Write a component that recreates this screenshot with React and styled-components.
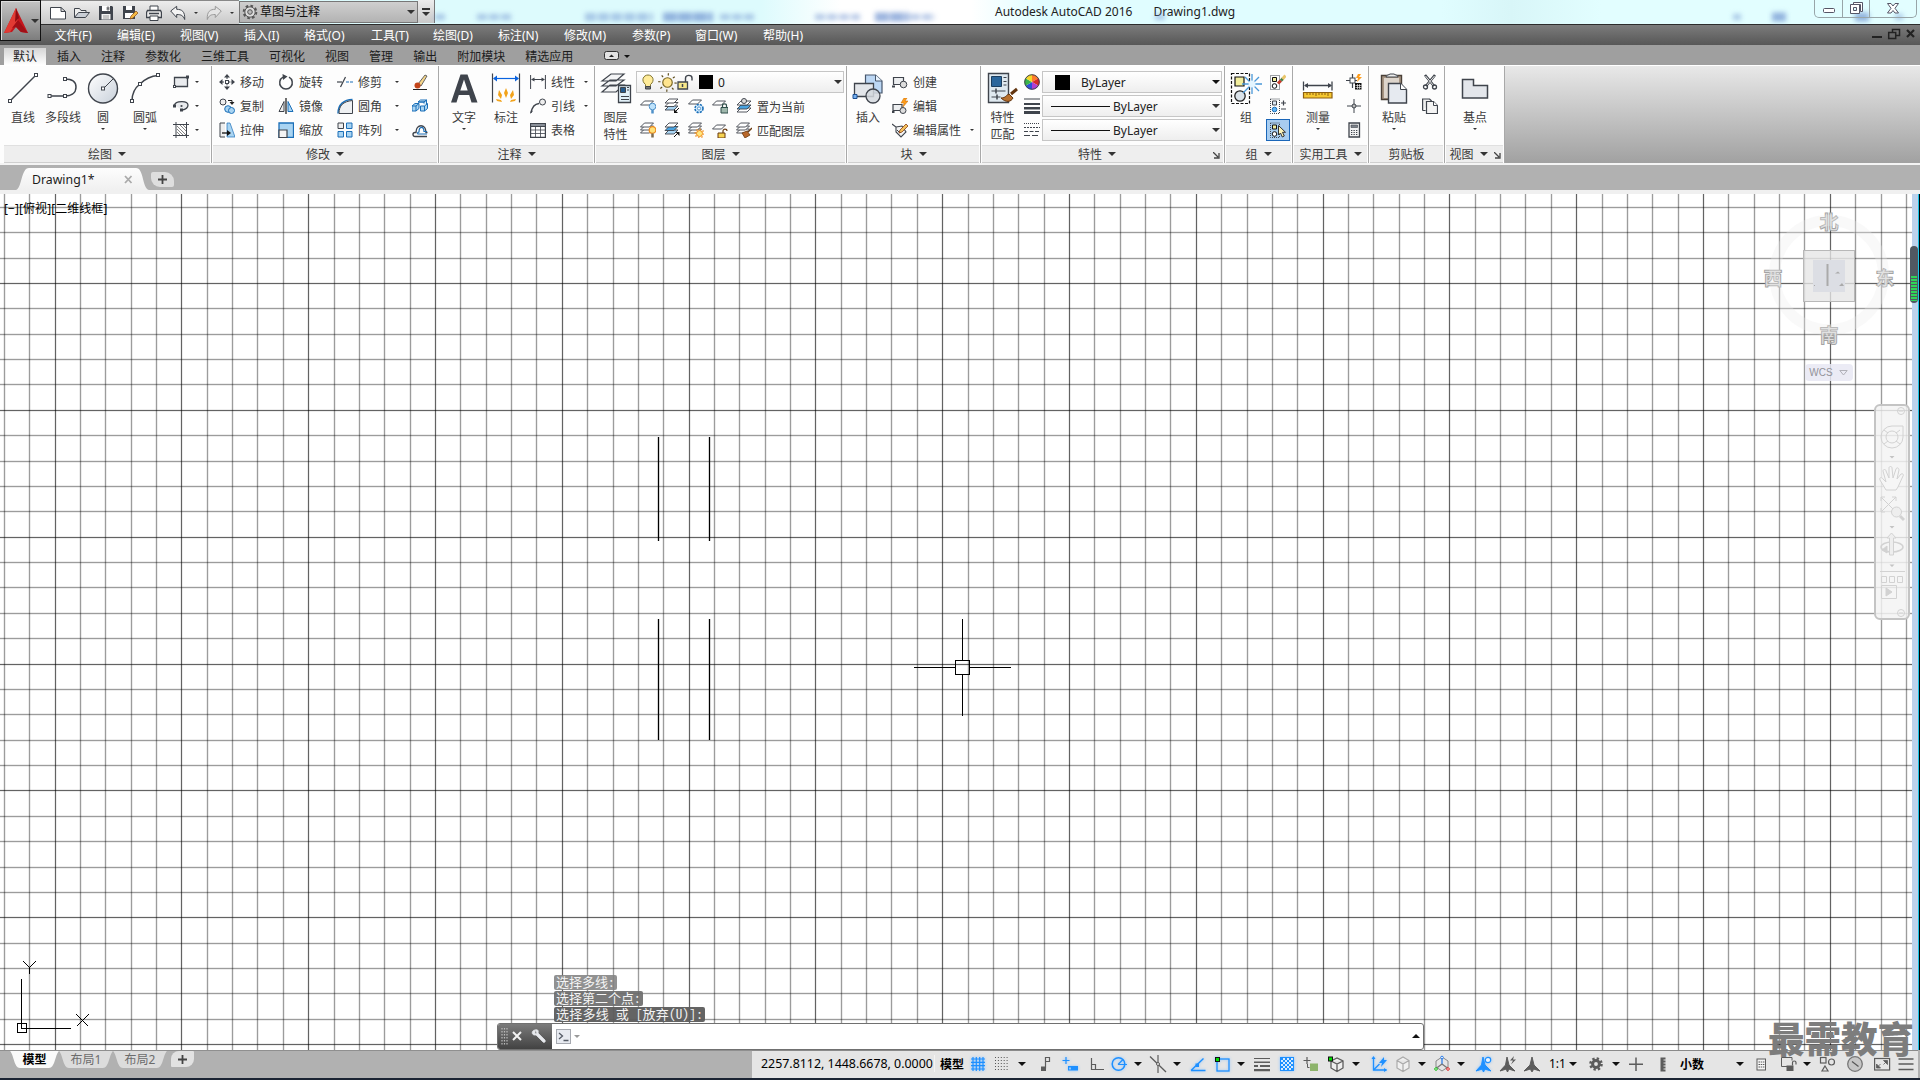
import React from "react";
import styled, { createGlobalStyle } from "styled-components";

const GlobalStyle = createGlobalStyle`
  * { box-sizing: border-box; }
  body {
    margin: 0;
    overflow: hidden;
    background: #b1b1b1;
    font-family: "Noto Sans", "Noto Sans CJK SC", sans-serif;
    font-size: 12px;
    color: #3b3b3b;
  }
  svg { display: block; flex: none; }
`

/* ---------- icons ---------- */

const DK = "#3f444c";
const BL = "#1b6fb8";
const LB = "#a9d4f2";
const SB = "#1e90ff";
const GR = "#5c5c5c";

const node = (x, y, s = 3) => <rect x={x - s / 2} y={y - s / 2} width={s} height={s} fill="#fff" stroke={DK} />;
const sheet = (x, y, fill = "#fff", w = 9) => (
  <path d={`M${x} ${y + 4}l4-4h${w}l-4 4z`} fill={fill} stroke={DK} strokeWidth=".9" />
);

const ICONS = {
  // quick access
  newFile: <path d="M.5 2.500h10.500l4.500 4v7.500h-15zM11 2.500v4h4.500" fill="#fff" stroke={DK} />,
  open: <><path d="M.5 12.500v-9h5l1.500 2h5v2" fill="#eee" stroke={DK} /><path d="M.5 12.500l4-5h11l-4 5z" fill="#c9ced5" stroke={DK} /></>,
  save: <><path d="M1 1h13l1 1v13h-14z" fill={DK} /><path d="M4 1h8v5h-8z" fill="#fff" /><path d="M3.500 9h9v5.500h-9z" fill="#f3f3f3" /><path d="M9 2h2v3h-2zM5 11h6M5 13h6" fill={DK} stroke="#999" /></>,
  saveAs: <><path d="M1 1h12v13h-12z" fill={DK} /><path d="M4 1h6v4h-6zM3 8h8v5h-8z" fill="#fff" /><path d="M8 14l1-3 5-5 2 2-5 5z" fill="#f4b942" stroke="#8b4a16" strokeWidth=".7" /></>,
  print: <><path d="M4 6v-5h8v5" fill="#fff" stroke={DK} /><path d="M1.500 5.500h13l1 2v5h-15v-5z" fill="#e8e8e8" stroke={DK} strokeWidth="1.300" /><path d="M4 11h8v4.500h-8z" fill="#fff" stroke={DK} /><path d="M3 8.500h10" stroke={DK} strokeWidth="1.500" /></>,
  undo: <path d="M.7 6l6-4.700v3c5 0 8.500 2 8 10.200-1.500-4-3.500-5-8-5v3z" fill="#f4f4f4" stroke={DK} />,
  redo: <path d="M15.300 6l-6-4.700v3c-5 0-8.500 2-8 10.200 1.500-4 3.500-5 8-5v3z" fill="#e4e4e4" stroke="#999" />,
  gear: <><circle cx="8" cy="8" r="6.300" fill="none" stroke="#555" strokeWidth="2" strokeDasharray="2.600 2.300" /><circle cx="8" cy="8" r="5.200" fill="#ddd" stroke="#555" /><circle cx="8" cy="8" r="2.300" fill="#bbb" stroke="#555" /></>,

  // draw
  line: <><path d="M3.500 28.500L28.500 3.500" stroke={DK} strokeWidth="1.500" />{node(3, 29)}{node(29, 3)}</>,
  polyline: <><path d="M2 24h16c5 0 11-2 11-9s-6-8-11-8" fill="none" stroke={DK} strokeWidth="1.500" />{node(2.500, 24)}{node(18, 24)}{node(18, 7)}</>,
  circle: <><defs><linearGradient id="sphere" x2="1" y2="1"><stop stopColor="#fff" /><stop offset="1" stopColor="#c8d0da" /></linearGradient></defs><circle cx="16" cy="16.500" r="14.500" fill="url(#sphere)" stroke={DK} strokeWidth="1.400" /><path d="M17 16l10-10" stroke={DK} />{node(16, 16.500)}</>,
  arc: <><path d="M3 29c0-9 4-14 8-17 5-5 10-8 18-8.500" fill="none" stroke={DK} strokeWidth="1.500" />{node(3, 29)}{node(11, 12)}{node(29, 3)}</>,
  rect: <><path d="M1.500 3.500h13v9h-13z" fill="#e9ebee" stroke={DK} strokeWidth="1.300" />{node(14.500, 3, 2)}{node(1.500, 12.500, 2)}</>,
  ellipse: <><path d="M1.500 7c1-4 13-5 13.500 0 0 3-3 4.500-6 5" fill="#e9ebee" stroke={DK} strokeWidth="1.300" />{node(1.500, 8, 2)}{node(8.500, 12, 2)}{node(8.500, 8, .8)}</>,
  hatch: <><path d="M3 0v16M13.500 0v16M0 2.500h16M0 13.500h16" stroke={DK} /><path d="M4 7l6 6M4 4l9 9M7 3l6 6M10 3l3 3M4 10l3 3" stroke="#777" strokeWidth=".9" /></>,

  // modify
  move: <><path d="M8 0l3 3.500H5zM8 16l3-3.500H5zM0 8l3.500-3v6zM16 8l-3.500-3v6z" fill={DK} /><path d="M8 3v10M3 8h10" stroke={DK} strokeDasharray="2 1.200" /><rect x="6.500" y="6.500" width="3" height="3" fill="#fff" stroke={DK} /></>,
  rotate: <><path d="M5 3.200A6.300 6.300 0 1 0 11 3.200" fill="none" stroke={DK} strokeWidth="1.500" /><path d="M4.500 0l5 2.500-4.500 3.500z" fill={DK} /></>,
  trim: <><path d="M0 8h5" stroke={DK} strokeWidth="1.200" /><path d="M3.500 13L8.500 3" stroke={DK} strokeWidth="1.200" /><path d="M9 8h7" stroke={BL} strokeWidth="1.200" strokeDasharray="3 1" /></>,
  erase: <><path d="M1 15.500h14" stroke="#222" /><path d="M6 10l7-9 2 1-6 10z" fill="#f5d58a" stroke={DK} strokeWidth=".8" /><circle cx="5.500" cy="11.500" r="3" fill="#c4451a" /></>,
  copy: <><circle cx="4" cy="4" r="3" fill="#eee" stroke={DK} /><circle cx="9" cy="11" r="3.300" fill={LB} stroke={BL} /><circle cx="12.500" cy="12.500" r="3" fill={LB} stroke={BL} /><path d="M9 2.500h4v2" fill="none" stroke="#222" /><path d="M10.500 4h5l-2.500 3z" fill="#222" /></>,
  mirror: <><path d="M6 3.500v10h-5z" fill="#eee" stroke={DK} /><path d="M8 0v16" stroke="#222" strokeWidth="1.300" /><path d="M10 3.500v10h5z" fill={LB} stroke={BL} /></>,
  fillet: <><path d="M1 15.500c0-9 6-14 14.500-14" fill="none" stroke={BL} strokeWidth="1.500" /><path d="M2 15.500c0-8 4-12 13.500-13v13z" fill="#eef0f2" stroke={DK} /></>,
  explode: <><path d="M0 8l3-2.500h4v5l-3 2.500H0z" fill={LB} stroke={BL} /><path d="M0 8h4v5M4 8l3-2.500" fill="none" stroke={BL} /><path d="M6 4l2.500-2h6L12 4zM6 4h6v1.500M12 4l2.500-2v5.500l-3 2.500" fill="#d8ecfa" stroke={BL} /><path d="M8.500 8h4v5h-4zM12.500 8l3-2.500v5l-3 2.500" fill={LB} stroke={BL} /></>,
  stretch: <><path d="M6 15h-5v-14h5" fill="#eee" stroke={DK} /><path d="M8 1h3l5 14h-8z" fill={LB} stroke={BL} strokeWidth=".7" /><path d="M3 11h7" stroke="#111" strokeWidth="1.300" /><path d="M8 8l4 3-4 3z" fill="#111" /></>,
  scale: <><path d="M1 1h14.500v14.500h-14.500z" fill={LB} stroke={BL} strokeWidth="1.300" /><path d="M1 8h8v7.500h-8z" fill="#f4f4f4" stroke={DK} strokeWidth="1.200" /></>,
  array: <><path d="M1 1h5.500v5.500H1z" fill="#eee" stroke={DK} /><path d="M9.500 1h5.500v5.500h-5.500zM1 9.500h5.500v5.500H1zM9.500 9.500h5.500v5.500h-5.500z" fill={LB} stroke={BL} /></>,
  offset: <><path d="M15 14.500H3a2 2 0 0 1 0-4h1c0-9 10-9 10 0h1.500" fill="none" stroke={DK} strokeWidth="1.400" /><path d="M15 12h-9c-1-1 0-2 1-2 0-6 5-6 5-.5h3" fill="none" stroke={BL} strokeWidth="1.200" /></>,

  // annotate
  text: <path d="M3 30.500h5.500l2.300-7.500h10.400l2.300 7.500h6L19.500 2.500h-7zM12.300 18.500L16 7.500l3.700 11z" fill={DK} />,
  dim: <><path d="M2.500 1.500v29M29.500 1.500v29" stroke={DK} strokeWidth="1.200" /><path d="M4 6.500h24" stroke="#0a63e0" strokeWidth="1.200" /><path d="M3 6.500l4-3v6zM29 6.500l-4-3v6z" fill="#0a63e0" /><path d="M16 16l2 5-2 5-2-5zM9 18l3 5-1 4-3-4zM23 18l-3 5 1 4 3-4zM6 27l5 1 1 2-5-1zM26 27l-5 1-1 2 5-1z" fill="#f2a31b" /></>,
  linear: <><path d="M.6 1v14M15.400 1v14M2 5.500h12" stroke={DK} /><path d="M1 5.500l3.500-2v4zM15 5.500l-3.500-2v4z" fill={DK} /></>,
  leader: <><path d="M1 15c1-6 3-9 8-9.500" fill="none" stroke={DK} strokeWidth="1.300" /><circle cx="12.500" cy="4" r="3" fill="#eee" stroke={DK} /><path d="M0 16l1-4 2 1z" fill={DK} /></>,
  table: <><path d="M.6 1.500h14.800v13.800H.6z" fill="#fff" stroke={DK} strokeWidth="1.200" /><path d="M.6 1.500h14.800v3H.6z" fill="#8a9099" stroke={DK} /><path d="M5.500 4v11M10.500 4v11M1 8h14M1 11.500h14" stroke={DK} strokeWidth=".8" /></>,

  // layers
  layerProps: <><path d="M2 20l8-7h14l-8 7zM2 14l8-6h14l-8 6zM2 9l9-7h13l-8 7z" fill="#f4f5f6" stroke={DK} strokeWidth="1.200" /><path d="M18.500 13.500h12v17h-12z" fill="#e2f0f8" stroke={DK} strokeWidth="1.300" /><path d="M20.500 15.500h5v5h-5z" fill="#24598b" stroke={DK} /><path d="M27 15.500h2M27 18h2M21 24.500h8M21 27.500h8" stroke={DK} /></>,
  layOff: <>{sheet(.5, 3)}<circle cx="12.500" cy="8.500" r="3.300" fill="#bfe3fb" stroke="#4f91c9" /><path d="M12.500 12v3.500" stroke="#4f91c9" strokeWidth="2.500" /></>,
  layIso: <>{sheet(1, 8, LB)}{sheet(1, 4.500)}{sheet(1, 1)}<path d="M15 10l-4 4" stroke="#111" /><path d="M10 11v4h4z" fill="#111" /></>,
  layFreeze: <>{sheet(.5, 2)}<circle cx="11" cy="10.500" r="4" fill="#d8efff" stroke={BL} strokeWidth="1.600" strokeDasharray="2.200 1" /><circle cx="11" cy="10.500" r="1.600" fill="#fff" stroke={BL} strokeWidth=".7" /></>,
  layLock: <>{sheet(.5, 3)}<path d="M9 9.500h7v5.500h-7z" fill="#9fb8ad" stroke="#2f4f4a" /><path d="M10.500 9.500v-2c0-2.300 4-2.300 4 0v2" fill="none" stroke="#2f4f4a" strokeWidth="1.200" /></>,
  layCurrent: <>{sheet(1, 10, "#fff", 10)}{sheet(1, 7, "#4aa3e0", 10)}{sheet(1, 3, "#fff", 10)}<circle cx="8" cy="3" r="2.500" fill="#ddd" stroke={DK} /></>,
  layOn: <>{sheet(.5, 7)}{sheet(.5, 4)}{sheet(.5, 1)}<circle cx="12.500" cy="8" r="3.300" fill="#ffe27a" stroke="#ee8b1a" strokeWidth="1.200" /><path d="M12.500 11.500v4" stroke="#7b6b50" strokeWidth="2.500" /></>,
  layUniso: <>{sheet(1, 8, LB)}{sheet(1, 4.500, "#4aa3e0")}{sheet(1, 1)}<path d="M10 15l4-4" stroke="#111" /><path d="M15.500 10v4l-4-4z" fill="#111" /></>,
  layThaw: <>{sheet(.5, 7)}{sheet(.5, 4)}{sheet(.5, 1)}<circle cx="11.500" cy="11.500" r="3" fill="#ffe680" stroke="#f08a15" /><circle cx="11.500" cy="11.500" r="4.300" fill="none" stroke="#f08a15" strokeWidth="1.300" strokeDasharray="1.300 2" /></>,
  layUnlock: <>{sheet(.5, 3)}<path d="M6 11h7v5h-7z" fill="#f6d352" stroke="#6b3b10" /><path d="M11 11v-2c0-2.500 4-2.500 4 0" fill="none" stroke="#6b3b10" strokeWidth="1.200" /></>,
  layMatch: <>{sheet(.5, 7)}{sheet(.5, 4)}{sheet(.5, 1)}<path d="M6 11l5-2 3 4-5 3z" fill="#b9682a" stroke="#6b3b10" strokeWidth=".8" /><path d="M12 10l4-4" stroke="#6b3b10" strokeWidth="1.500" /></>,
  bulb: <><path d="M5.500 10.500c-5-4-2-9.500 2.500-9.500s7.500 5.500 2.500 9.500v2h-5z" fill="#ffec9a" stroke="#82752f" /><path d="M5.500 12.500h5v2.500h-5z" fill="#777" stroke={DK} /></>,
  sun: <><circle cx="8" cy="8" r="4" fill="#ffe58f" stroke="#7c6824" /><circle cx="8" cy="8" r="6.800" fill="none" stroke="#5b4a1a" strokeWidth="2" strokeDasharray="1 4.340" /></>,
  openLock: <><path d="M1 8h9.500v7H1z" fill="#f7e78a" stroke={DK} strokeWidth="1.300" /><path d="M8.500 8V4c0-3.500 6.500-3.500 6.500 0v2.500" fill="none" stroke={DK} strokeWidth="1.400" /><path d="M5.500 10v3" stroke={DK} strokeWidth="1.500" /></>,

  // block
  insert: <><path d="M13.500 3h10l6.500 6v12h-16.500z" fill="#bcd7f4" stroke="#46566c" strokeWidth="1.200" /><path d="M23.500 3v6h6.500" fill="#e9f3fd" stroke="#46566c" /><path d="M2.500 11.500h19v13h-19z" fill="#e3e6ea" stroke={DK} strokeWidth="1.300" /><circle cx="21" cy="24" r="7" fill="#d3d8de" fillOpacity=".85" stroke={DK} strokeWidth="1.300" /><path d="M1 22.500h4v4h-4z" fill="#77b0ee" stroke="#1d4f91" /></>,
  blkCreate: <><path d="M1.500 3.500h10v7h-10z" fill="#eceef0" stroke={DK} strokeWidth="1.200" /><circle cx="11.500" cy="10.500" r="3.300" fill="#ddd" stroke={DK} /><path d="M0 11.500h3v2H0z" fill={DK} /></>,
  blkEdit: <><path d="M1 6.500h9v6h-9z" fill="#eceef0" stroke={DK} strokeWidth="1.200" /><circle cx="11" cy="12.500" r="3" fill="#ddd" stroke={DK} /><path d="M12 0l-3 5h3l-1 4 5-6h-3l2-3z" fill="#ff9d1c" stroke="#c66a00" strokeWidth=".5" /><path d="M0 13h2.500v2H0z" fill={DK} /></>,
  attEdit: <><path d="M0 2l4 3v5l5 5 5-5-4-6-6 1" fill="#f2f2f2" stroke={DK} strokeWidth="1.100" /><path d="M5 8l3 3 3-4" stroke={DK} fill="none" /><path d="M7 11l1-3 6-6 2 2-6 6z" fill="#f3c15c" stroke="#8a3d12" strokeWidth=".8" /></>,

  // properties
  matchProps: <><path d="M1.500 1.500h20v29h-20z" fill="#dfe9f0" stroke={DK} strokeWidth="1.400" /><path d="M4.500 4.500h10v10h-10z" fill="#2a669c" stroke="#1b3e5f" /><path d="M16.500 5.500h3M16.500 9.500h3M16.500 13h3M4.500 19h14M4.500 25h9" stroke={DK} strokeWidth="1.200" /><path d="M9 16.500v5M10 22.500v5" stroke={DK} strokeWidth="1.500" /><path d="M14 26c5 0 5-3 8-4l4 4c-2 4-7 5-12 0z" fill="#b8702d" stroke="#62340f" /><path d="M24 22l6-5" stroke="#62340f" strokeWidth="3" /></>,
  colorWheel: <><path d="M8 8L8 .5a7.500 7.500 0 0 1 6.500 3.800z" fill="#ff7b2a" /><path d="M8 8l6.500-3.700a7.500 7.500 0 0 1 0 7.500z" fill="#d82a2a" /><path d="M8 8l6.500 3.700a7.500 7.500 0 0 1-6.500 3.800z" fill="#b03ed0" /><path d="M8 8v7.500a7.500 7.500 0 0 1-6.500-3.800z" fill="#2f4fd8" /><path d="M8 8l-6.500 3.700a7.500 7.500 0 0 1 0-7.500z" fill="#38b34a" /><path d="M8 8L1.500 4.300A7.500 7.500 0 0 1 8 .5z" fill="#f4d72a" /><circle cx="8" cy="8" r="7.300" fill="none" stroke={DK} /></>,
  lineWeight: <path d="M0 .5h16v1H0zM0 5h16v2H0zM0 9h16v2.500H0zM0 13h16v3H0z" fill={DK} />,
  lineType: <g stroke={DK}><path d="M0 1.500h16" strokeDasharray="1 1" /><path d="M0 5.500h16" strokeDasharray="2 1" /><path d="M0 9.500h16" strokeDasharray="4 1.500" /><path d="M0 13.500h16" strokeDasharray="6 2" /></g>,

  // group
  group: <><path d="M1.500 1.500h18v30h-18z" fill="none" stroke="#111" strokeWidth="1.200" strokeDasharray="3 1.500" /><path d="M5 5h9v9H5z" fill="#f2ee9d" stroke="#111" strokeWidth="1.200" /><circle cx="10" cy="24" r="5.200" fill="#dbe3ea" stroke="#222" strokeWidth="1.300" /><path d="M22 2v20M12 12h20M15 5l14 14M29 5L13 21" stroke="#4a98d8" strokeWidth="1.300" /><circle cx="22" cy="12" r="3.500" fill="#e3f5ff" /></>,
  ungroup: <><path d="M.5 1.500h9v14h-9z" fill="none" stroke={DK} strokeDasharray="1 1" /><path d="M2.500 3.500h4v4h-4z" fill="#f2ee9d" stroke="#111" /><circle cx="4.500" cy="12" r="2.300" fill="#fff" stroke="#111" /><path d="M8 9.500l3-3" stroke="#c33a2a" strokeWidth="3" /><path d="M11 6.500l2-2" stroke="#3f7d4a" strokeWidth="3" /><path d="M12.500 5l3-3.500" stroke="#e9c56a" strokeWidth="3" /></>,
  grpEdit: <><path d="M.5 1h9v14.500h-9z" fill="none" stroke={DK} strokeDasharray="1 1" /><path d="M2.500 3h4v4h-4z" fill="#dce9f5" stroke={DK} /><circle cx="4.500" cy="11.500" r="2.300" fill="#5fb4f5" stroke={BL} /><path d="M11 5h5M13.500 2.500v5M11 11h5" stroke={DK} strokeWidth="1.200" /></>,
  grpSel: <><path d="M.5 1h9v14.500h-9z" fill="none" stroke={DK} strokeDasharray="1 1" /><path d="M2.500 3h4v4h-4z" fill="#f2ee9d" stroke="#111" /><circle cx="4.500" cy="12" r="2.300" fill="#fff" stroke="#111" /><path d="M8.500 3.500v9.500l2-2 1.800 4 2-1-1.800-3.700h3z" fill="#fdf4b8" stroke="#333" /></>,

  // utilities, clipboard, view
  measure: <><path d="M1.500 9.500v9M30 9.500v9M3 13.500h26" stroke={DK} strokeWidth="1.300" /><path d="M2 13.500l4-2.500v5zM30 13.500l-4-2.500v5z" fill={DK} /><path d="M1.500 20.500h28.500v5.500h-28.500z" fill="#f5c830" stroke="#8d5f10" strokeWidth="1.200" /><path d="M5 21v2M8 21v2M11 21v2M14 21v3M17 21v2M20 21v2M23 21v2M26 21v3" stroke="#8d5f10" /></>,
  quickSel: <><path d="M6.500 0v4M6.500 9v5M0 6.500h4M9 6.500h2" stroke={DK} strokeWidth="1.200" /><rect x="4" y="4" width="5" height="5" fill="#fff" stroke={DK} /><path d="M12 0l-2 4h2l-1 4 5-5h-3l2-3z" fill="#ff9d1c" /><path d="M9 9h6.500v6.500H9z" fill="#111" /><path d="M9.500 11.500h6M9.500 13.500h6M11.500 10v5M13.500 10v5" stroke="#fff" strokeWidth=".6" /></>,
  point: <><path d="M8 1v14M1 8h14" stroke={DK} /><circle cx="8" cy="8" r="2" fill="#bbb" stroke={DK} /></>,
  calc: <><path d="M3 1h10.500v14H3z" fill="#f3f3f3" stroke={DK} strokeWidth="1.300" /><path d="M5 3h6.500v2.500H5z" fill="#7c828a" stroke={DK} strokeWidth=".6" /><path d="M5 8.500h7M5 10.500h7M5 12.500h7" stroke={DK} strokeWidth="1.200" strokeDasharray="1.300 1.200" /></>,
  paste: <><path d="M3.500 3.500h20v24h-20z" fill="#a89684" stroke="#4a4038" strokeWidth="1.400" /><path d="M6 6h15v20H6z" fill="#ddd5cc" /><path d="M8 5c0-2 3-2 4-3h4c1 1 4 1 4 3z" fill="#eee" stroke={DK} /><path d="M10.500 11.500h12l6 6v13.500h-18z" fill="#e6eaf0" stroke={DK} strokeWidth="1.400" /><path d="M22.500 11.500v6h6" fill="#fff" stroke={DK} /></>,
  cut: <><path d="M3 1l9 11M13 1L4 12" stroke={DK} strokeWidth="2.600" /><path d="M3.500 2l8 9.500M12.500 2l-8 9.500" stroke="#e8e8e8" /><circle cx="3.500" cy="13" r="2" fill="none" stroke={DK} strokeWidth="1.300" /><circle cx="12.500" cy="13" r="2" fill="none" stroke={DK} strokeWidth="1.300" /></>,
  copyClip: <><path d="M.6 12.500v-11.500h7l2 2" fill="#eee" stroke={DK} strokeWidth="1.200" /><path d="M.6 12.500h3" stroke={DK} /><path d="M4.500 3.500h7l4 4v8h-11z" fill="#f4f4f4" stroke={DK} strokeWidth="1.200" /><path d="M11.500 3.500v4h4" fill="#fff" stroke={DK} /></>,
  base: <path d="M3.500 7.500h11v6h14v12.500h-25z" fill="#e3e6eb" stroke={DK} strokeWidth="1.500" />,

  // status bar
  sGrid: <path d="M3 1v14M6.300 1v14M9.700 1v14M13 1v14M1 3h14M1 6.300h14M1 9.700h14M1 13h14" stroke={SB} strokeWidth="1.200" />,
  sSnap: <g stroke="#555" strokeDasharray="1 1.900"><path d="M1 1.500h14M1 4.500h14M1 7.500h14M1 10.500h14M1 13.500h14" /></g>,
  sInfer: <><path d="M8.500 1.500h4v4h-4zM8.500 1.500v11" fill="none" stroke={GR} strokeWidth="1.200" /><rect x="4" y="10.500" width="5" height="4.500" fill={GR} /></>,
  sDyn: <><path d="M4 1v7M.5 4.500h7" stroke={SB} strokeWidth="1.200" /><rect x="6" y="10" width="10" height="4.500" fill={SB} /><path d="M8 11.500v2" stroke="#fff" /></>,
  sOrtho: <path d="M2.500 2v11.500h12.500M2.500 8.500h4v5" fill="none" stroke={GR} strokeWidth="1.200" />,
  sPolar: <><circle cx="7.500" cy="8" r="6.300" fill="none" stroke={SB} strokeWidth="1.500" /><path d="M7 8.500h9M7 8.500l5-5" stroke={SB} strokeWidth="1.200" /></>,
  sIso: <><path d="M8 -1v18" stroke={GR} strokeWidth="1.200" /><path d="M0 .5l16 15.500" stroke={GR} strokeWidth="1.300" /><circle cx="8" cy="8" r="1.500" fill="#eee" stroke={GR} /></>,
  sTrack: <><path d="M1 14.500h14.500M1 14.500L13.500 2.500" stroke={SB} strokeWidth="1.400" /><rect x="5.500" y="7.500" width="3.500" height="3.500" fill={SB} /></>,
  sOsnap: <><rect x="3" y="3" width="12" height="12" fill="none" stroke={SB} strokeWidth="1.300" /><rect x="1.500" y="1.500" width="4" height="4" fill="#0d0" stroke="#111" /></>,
  sLwt: <path d="M0 2h16v1H0zM0 5.500h16v1.500H0zM6 9h10v2H6zM0 9h4v2H0zM0 13h16v2.300H0z" fill={GR} />,
  sTrans: <><rect x="1.500" y="1.500" width="13" height="13" fill="#d8ecff" stroke={SB} /><g stroke={SB} strokeWidth="2" strokeDasharray="2 2"><path d="M2 3h12M4 5h10M2 7h12M4 9h10M2 11h12M4 13h10" /></g></>,
  sCycle: <><path d="M4 1v7M.5 4.500h7" stroke={GR} strokeWidth="1.200" /><rect x="7" y="7.500" width="8" height="7.500" fill="#8db36b" /><path d="M4.500 8v3.500h2" fill="none" stroke={GR} /></>,
  s3d: <><path d="M3 5l6-3 6 3v7l-6 3.500-6-3.500zM3 5l6 3 6-3M9 8v7" fill="#eee" stroke={GR} strokeWidth="1.300" /><rect x=".5" y="1" width="4" height="4" fill="#0d0" stroke="#111" /></>,
  sDucs: <><path d="M2.500 1v13h13M2.500 14l6-6" fill="none" stroke={SB} strokeWidth="1.300" /><path d="M2.500 0l2 3h-4zM16 14l-3-2v4z" fill={SB} /><path d="M13 1l-5 6h3l-1 4 6-7h-3z" fill={SB} /></>,
  sFilter: <path d="M2 4.500l6-3.500 6 3.500v7.500l-6 3.500-6-3.500zM2 4.500l6 3.500 6-3.500M8 8v7" fill="#f0f0f0" stroke="#aaa" strokeWidth="1.200" />,
  sGizmo: <><path d="M2 5l6-4 6 4v6l-6 4-6-4z" fill="none" stroke="#888" /><path d="M8 8V2" stroke="#2b7de9" strokeWidth="1.300" /><path d="M8 8l-6 4.500" stroke="#777" strokeWidth="1.300" /><path d="M8 8l6 4.500" stroke="#777" strokeWidth="1.300" /><circle cx="8" cy="1.500" r="1.300" fill="#fff" stroke="#2b7de9" /><circle cx="2" cy="13" r="1.300" fill="#fff" stroke="#1b1" /><circle cx="14" cy="13" r="1.300" fill="#fff" stroke="#d22" /></>,
  sVis: <><path d="M7 1l2 8 6 6-6.500-2-.5 2.500h-1L6.500 13 0 15l5.500-6z" fill={SB} stroke={SB} /><circle cx="12" cy="4" r="2.700" fill="#eaf4ff" stroke={SB} strokeWidth="1.200" /></>,
  sAuto: <><path d="M7 1l2 8 6 6-6.500-2-.5 2.500h-1L6.500 13 0 15l5.500-6z" fill={GR} stroke={GR} /><path d="M14 0l-4 4.500h3l-2 4 5-5h-3z" fill={GR} /></>,
  sAnno: <path d="M8 1l2 8 6 6-6.500-2-1 2.500h-1L6.500 13 0 15l6-6z" fill={GR} stroke={GR} />,
  sGear: <><circle cx="8" cy="8" r="5.300" fill="none" stroke={GR} strokeWidth="3" strokeDasharray="2.200 1.960" /><circle cx="8" cy="8" r="3.400" fill="none" stroke={GR} strokeWidth="3" /></>,
  sPlus: <path d="M8 1.500v13.500M1 8.300h14" stroke={GR} strokeWidth="1.500" />,
  sUnits: <path d="M5.500 1.500h5v2h-2v1h2v2h-2v1h2v2h-2v1h2v2h-2v1h2v2h-5z" fill={GR} />,
  sProps: <><rect x="4" y="3" width="8.500" height="11" fill="#f4f4f4" stroke={GR} /><path d="M5.500 6h6M5.500 8.500h6M5.500 11h6" stroke={GR} strokeDasharray="1.500 .7" /></>,
  sLock: <><path d="M12 4.500v-3h-10.500v9h6" fill="none" stroke={GR} /><rect x="6.500" y="9.500" width="7" height="5.500" fill={GR} /><path d="M12.500 9.500v-3c0-2 3.500-2 3.500 0v2" fill="none" stroke={GR} strokeWidth="1.200" /></>,
  sIsol: <><rect x="1.500" y="1.500" width="5.500" height="5.500" fill="none" stroke={GR} strokeWidth="1.200" /><circle cx="12.500" cy="6" r="3" fill="none" stroke={GR} strokeWidth="1.200" /><path d="M6 10l3 5h-6z" fill="none" stroke={GR} strokeWidth="1.200" /></>,
  sHard: <><circle cx="8" cy="8" r="7.300" fill="#c6c6c6" stroke="#777" strokeWidth="1.300" /><path d="M5 5.500l6.500 5" stroke="#555" strokeWidth="1.200" /></>,
  sClean: <><rect x=".6" y="2.500" width="15" height="11.500" fill="none" stroke={GR} strokeWidth="1.200" /><path d="M9.500 4.500h4v4zM6.500 12h-4V8zM12.500 5.500l-3 3M3.500 11l3-3" fill={GR} stroke={GR} strokeWidth=".8" /></>,
  sMenu: <path d="M.5 3h15M.5 8h15M.5 13.500h15" stroke={GR} strokeWidth="1.600" />,
};

const Icon = ({ name, size = 16, box = 16 }) => (
  <svg width={size} height={size} viewBox={`0 0 ${box} ${box}`} fill="none">{ICONS[name]}</svg>
);

const Caret = styled.span`
  flex: none;
  width: 0;
  height: 0;
  border: ${({ $s }) => $s || 3}px solid transparent;
  border-top: ${({ $s }) => ($s || 3) }px solid ${({ $c }) => $c || "#333"};
  border-bottom: 0;
`

/* ---------- header ---------- */

const SApp = styled.div`
  display: flex;
  flex-direction: column;
  width: 1920px;
  height: 1080px;
  overflow: hidden;
`

const SHeader = styled.div`
  display: grid;
  grid-template-columns: 41px 1fr;
  height: 45px;
  background: linear-gradient(#a9a9a9, #575757);
`

const SAppButton = styled.div`
  display: flex;
  align-items: center;
  justify-content: center;
  gap: 2px;
  height: 41px;
  border: 1px solid #111;
  box-shadow: inset 1px 1px 0 #ddd;
  background: linear-gradient(#c4c4c4, #7d7d7d);
`

const STitleBar = styled.div`
  position: relative;
  display: flex;
  height: 25px;
  border-bottom: 1px solid #2c2c2c;
  background: linear-gradient(90deg, #ddfbfd 0 720px, #fff 800px 930px, #e0fdff 1000px 1400px, #d8f6f8 1470px, #e2feff 1560px);
`

const SQuick = styled.div`
  display: flex;
  align-items: center;
  width: 198px;
  padding-left: 9px;
  gap: 8px;
  border-top: 1px solid #888;
  background: linear-gradient(#ededed, #c9c9c9);
`

const SWorkspace = styled.div`
  display: flex;
  align-items: center;
  width: 179px;
  height: 22px;
  margin-top: 1px;
  padding: 0 2px;
  border: 1px solid #777;
  background: linear-gradient(#cfcfcf, #b3b3b3);
  color: #111;
  line-height: 20px;
  span:nth-of-type(1) { flex: 1; padding-left: 2px; }
`

const SQuickMore = styled.div`
  display: flex;
  flex-direction: column;
  align-items: center;
  justify-content: center;
  gap: 2px;
  width: 17px;
  height: 23px;
  border-right: 1px solid #777;
  background: linear-gradient(#ededed, #c9c9c9);
  i { width: 8px; height: 2px; background: #333; }
`

const STitle = styled.div`
  display: flex;
  gap: 21px;
  margin-left: 560px;
  padding-top: 3px;
  line-height: 18px;
  color: #222;
  white-space: pre;
`

const SGlass = styled.svg`
  position: absolute;
  left: 394px;
  top: 0;
  filter: blur(2.500px);
`

const SWinButtons = styled.div`
  position: absolute;
  right: 3px;
  top: 0;
  display: grid;
  grid-template-columns: 27px 27px 47px;
  height: 18px;
  border: 1px solid #98a5a8;
  border-top: 0;
  border-radius: 0 0 5px 5px;
  overflow: hidden;
  & > div { display: flex; align-items: center; justify-content: center; }
  & > div:first-child { padding-top: 3px; }
  & > div + div { border-left: 1px solid #98a5a8; }
`

const SMenuBar = styled.div`
  display: flex;
  height: 20px;
  padding-left: 13.500px;
  color: #fff;
`

const SMenuItem = styled.div`
  width: ${({ $w }) => $w}px;
  line-height: 21px;
  white-space: nowrap;
`

const SMdi = styled.div`
  margin: 2px 4px 0 auto;
`

const menus = [
  ["文件(F)", 62.500], ["编辑(E)", 63], ["视图(V)", 64], ["插入(I)", 60], ["格式(O)", 67], ["工具(T)", 62],
  ["绘图(D)", 65], ["标注(N)", 66], ["修改(M)", 68], ["参数(P)", 63], ["窗口(W)", 68], ["帮助(H)", 60],
];

const Header = () => (
  <SHeader>
    <SAppButton>
      <svg width="26" height="28" viewBox="0 0 26 28">
        <path d="M13 1L1 26l8-1 4-5 5 5 7 1z" fill="#c5161d" />
        <path d="M13 1l2 12-8 12-6 1z" fill="#e13a33" />
        <path d="M15 13l10 13-7-1-5-5-4 1z" fill="#a10f16" />
        <path d="M13 1l3 10-4 4z" fill="#8d0b12" />
      </svg>
      <Caret $s={4} />
    </SAppButton>
    <div>
      <STitleBar>
        <SQuick>
          <Icon name="newFile" /><Icon name="open" /><Icon name="save" /><Icon name="saveAs" />
          <Icon name="print" /><Icon name="undo" /><Caret $s={2.500} /><Icon name="redo" /><Caret $s={2.500} />
        </SQuick>
        <SWorkspace>
          <Icon name="gear" /><span>草图与注释</span><Caret $s={4} />
        </SWorkspace>
        <SQuickMore><i /><Caret $s={4} /></SQuickMore>
        <SGlass width="1480" height="24">
          <g fill="none" stroke="#6f93d0" strokeOpacity=".5">
            <path d="M0 17h12M42 17h36M285 17h35M380 17h45M475 17h25M720 17h12M1298 17h8M1460 17h8" strokeWidth="6" strokeDasharray="10 2" />
            <path d="M150 17h68" strokeWidth="8" strokeDasharray="11 2" />
            <path d="M228 17h50M440 17h34M1337 17h14M1420 17h14" strokeWidth="9" strokeDasharray="14 1" strokeOpacity=".7" />
          </g>
        </SGlass>
        <STitle><span>Autodesk AutoCAD 2016</span><span>Drawing1.dwg</span></STitle>
        <SWinButtons>
          <div><svg width="12" height="5"><rect x=".5" y=".5" width="11" height="4" rx="1" fill="#fff" stroke="#556" /></svg></div>
          <div>
            <svg width="13" height="13">
              <path d="M3.500.5h9v9h-2v-7h-7z" fill="#fff" stroke="#556" />
              <path d="M.5 2.500h9v9h-9zM3.500 5.500h3v3h-3z" fill="#fff" fillRule="evenodd" stroke="#556" />
            </svg>
          </div>
          <div><svg width="12" height="11"><path d="M.5.500h3.500l2 2.500 2-2.500h3.500l-3.500 4.800 3.500 4.700h-3.500l-2-2.500-2 2.500H.5l3.500-4.700z" fill="#fff" stroke="#556" /></svg></div>
        </SWinButtons>
      </STitleBar>
      <SMenuBar>
        {menus.map(([t, w]) => <SMenuItem key={t} $w={w}>{t}</SMenuItem>)}
        <SMdi>
          <svg width="44" height="14">
            <path d="M0 9h10v2H0z" fill="#222" />
            <path d="M16.700 5.500h7v6h-7zM20.500 5V2.500h7v6h-3.500" fill="none" stroke="#222" strokeWidth="1.500" />
            <path d="M35 3l7 7M42 3l-7 7" stroke="#222" strokeWidth="2.200" />
          </svg>
        </SMdi>
      </SMenuBar>
    </div>
  </SHeader>
)

/* ---------- ribbon ---------- */

const STabs = styled.div`
  display: flex;
  height: 20px;
  padding: 3px 0 0 4px;
  background: #9f9f9f;
`

const STab = styled.div`
  padding: 0 ${({ $on }) => ($on ? 9 : 10)}px;
  margin-right: ${({ $on }) => ($on ? 1 : 0)}px;
  line-height: 17px;
  color: ${({ $on }) => ($on ? "#222" : "#1c1c1c")};
  background: ${({ $on }) => ($on ? "linear-gradient(#d5d5d5, #fff)" : "none")};
`

const SMinimize = styled.div`
  display: flex;
  align-items: center;
  gap: 4px;
  margin-left: 21px;
  height: 12px;
  margin-top: 2px;
`

const SRibbon = styled.div`
  display: flex;
  height: 100px;
  padding-left: 3px;
  border-top: 1px solid #fff;
  border-bottom: 2px solid #f4f4f4;
  background: linear-gradient(90deg, #fdfdfd 1505px, transparent 1505px), linear-gradient(#e8e8e8, #a1a1a1);
`

const SPanel = styled.div`
  display: flex;
  flex-direction: column;
  width: ${({ $w }) => $w}px;
  border-right: 1px solid #a9a9a9;
`

const SPanelBody = styled.div`
  display: flex;
  height: 79px;
`

const SPanelFoot = styled.div`
  display: flex;
  align-items: center;
  justify-content: center;
  gap: 6px;
  height: 18px;
  margin: 0 1px;
  padding-right: ${({ $pr }) => $pr}px;
  border-top: 1px solid #e0e0e0;
  border-bottom: 1px solid #cfcfcf;
  background: #eee;
  position: relative;
`

const SLauncher = styled.svg`
  position: absolute;
  right: ${({ $r }) => $r}px;
  top: 6px;
`

const SBig = styled.div`
  display: flex;
  flex-direction: column;
  align-items: center;
  flex: none;
  width: ${({ $w }) => $w}px;
  padding-top: 6px;
  svg { margin-bottom: 5px; }
  & > span { margin-top: 2px; }
`

const SBigLabel = styled.div`
  line-height: 17px;
  text-align: center;
  white-space: pre;
`

const SCol = styled.div`
  display: flex;
  flex-direction: column;
  flex: none;
  width: ${({ $w }) => $w}px;
  padding-top: ${({ $pt }) => $pt || 4}px;
  padding-left: ${({ $pl }) => $pl || 0}px;
  padding-right: ${({ $pr }) => $pr || 0}px;
`

const SSmall = styled.div`
  display: flex;
  align-items: center;
  gap: ${({ $gap }) => $gap || 5}px;
  height: 24px;
  white-space: nowrap;
`

const SSmallLabel = styled.div`
  flex: 1;
  padding-top: 2px;
  line-height: 16px;
`

const SLayerRow = styled(SSmall)`
  gap: 8px;
  padding-left: 4px;
  & > span { margin-left: -3px; padding-top: 1px; }
`

const SPressed = styled.div`
  display: flex;
  align-items: center;
  width: 24px;
  height: 22px;
  margin: 1px 0 0 -4px;
  padding-left: 3px;
  border: 1px solid #1a66b8;
  background: #a8cdf0;
`

const SCombo = styled.div`
  display: flex;
  align-items: center;
  flex: none;
  width: ${({ $w }) => $w}px;
  height: 22px;
  margin-bottom: 2px;
  padding: 0 1px 0 ${({ $pl }) => $pl}px;
  border: 1px solid #c6c6c6;
  background: linear-gradient(#fff, #eee);
  color: #222;
  & > div { flex: 1; padding-top: 1px; }
`

const SLayerCombo = styled(SCombo)`
  margin: 1px 0;
  svg:first-child { margin-right: 2px; }
  i { margin-left: 6px; }
`

const SSwatch = styled.i`
  width: ${({ $s }) => $s}px;
  height: ${({ $s }) => $s}px;
  margin-right: ${({ $mr }) => $mr}px;
  background: #000;
`

const SStroke = styled.i`
  width: 59px;
  height: 1px;
  margin-right: 3px;
  background: #111;
`

const tabs = ["默认", "插入", "注释", "参数化", "三维工具", "可视化", "视图", "管理", "输出", "附加模块", "精选应用"];

const Big = ({ icon, label, w, drop }) => (
  <SBig $w={w}>
    <Icon name={icon} size={32} box={32} />
    <SBigLabel>{label}</SBigLabel>
    {drop && <Caret $s={2.500} />}
  </SBig>
)

const Small = ({ icon, label, drop, gap }) => (
  <SSmall $gap={gap}>
    <Icon name={icon} />
    {label && <SSmallLabel>{label}</SSmallLabel>}
    {drop && <Caret $s={2.500} />}
  </SSmall>
)

const Panel = ({ w, title, drop = true, launch, shift = 0, children }) => (
  <SPanel $w={w}>
    <SPanelBody>{children}</SPanelBody>
    <SPanelFoot $pr={shift}>
      <div>{title}</div>
      {drop && <Caret $s={4} />}
      {launch && <SLauncher $r={launch} width="7" height="7"><path d="M0 0l5 5M6 1v5H1" fill="none" stroke="#444" strokeWidth="1.300" /></SLauncher>}
    </SPanelFoot>
  </SPanel>
)

const Ribbon = () => (
  <>
    <STabs>
      {tabs.map((t, i) => <STab key={t} $on={i === 0}>{t}</STab>)}
      <SMinimize>
        <svg width="16" height="10"><rect x=".5" y=".5" width="14" height="8" rx="2" fill="#e4e4e4" stroke="#333" /><path d="M5 6l2.500-2.500L10 6z" fill="#222" /></svg>
        <Caret $s={3} $c="#111" />
      </SMinimize>
    </STabs>
    <SRibbon>
      <Panel w={209} title="绘图">
        <Big icon="line" label="直线" w={40} />
        <Big icon="polyline" label="多段线" w={40} />
        <Big icon="circle" label="圆" w={40} drop />
        <Big icon="arc" label="圆弧" w={44} drop />
        <SCol $w={40} $pl={6}>
          <Small icon="rect" drop gap={6} /><Small icon="ellipse" drop gap={6} /><Small icon="hatch" drop gap={6} />
        </SCol>
      </Panel>
      <Panel w={227} title="修改">
        <SCol $w={66} $pl={7}>
          <Small icon="move" label="移动" /><Small icon="copy" label="复制" /><Small icon="stretch" label="拉伸" />
        </SCol>
        <SCol $w={59}>
          <Small icon="rotate" label="旋转" /><Small icon="mirror" label="镜像" /><Small icon="scale" label="缩放" />
        </SCol>
        <SCol $w={75} $pr={13}>
          <Small icon="trim" label="修剪" drop /><Small icon="fillet" label="圆角" drop /><Small icon="array" label="阵列" drop />
        </SCol>
        <SCol $w={20}>
          <Small icon="erase" /><Small icon="explode" /><Small icon="offset" />
        </SCol>
      </Panel>
      <Panel w={156} title="注释">
        <Big icon="text" label="文字" w={50} drop />
        <Big icon="dim" label="标注" w={34} />
        <SCol $w={65} $pl={7}>
          <Small icon="linear" label="线性" drop /><Small icon="leader" label="引线" drop /><Small icon="table" label="表格" />
        </SCol>
      </Panel>
      <Panel w={252} title="图层">
        <Big icon="layerProps" label={"图层\n特性"} w={41} />
        <SCol $w={209}>
          <SLayerCombo $w={208} $pl={3}>
            <Icon name="bulb" /><Icon name="sun" size={19} /><Icon name="openLock" /><SSwatch $s={14} $mr={5} /><div>0</div><Caret $s={4} />
          </SLayerCombo>
          <SLayerRow>
            <Icon name="layOff" /><Icon name="layIso" /><Icon name="layFreeze" /><Icon name="layLock" /><Icon name="layCurrent" /><span>置为当前</span>
          </SLayerRow>
          <SLayerRow>
            <Icon name="layOn" /><Icon name="layUniso" /><Icon name="layThaw" /><Icon name="layUnlock" /><Icon name="layMatch" /><span>匹配图层</span>
          </SLayerRow>
        </SCol>
      </Panel>
      <Panel w={134} title="块">
        <Big icon="insert" label="插入" w={42} />
        <SCol $w={85} $pl={3}>
          <Small icon="blkCreate" label="创建" /><Small icon="blkEdit" label="编辑" /><Small icon="attEdit" label="编辑属性" drop />
        </SCol>
      </Panel>
      <Panel w={244} title="特性" launch={3} shift={11}>
        <Big icon="matchProps" label={"特性\n匹配"} w={43} />
        <SCol $w={18}>
          <Small icon="colorWheel" /><Small icon="lineWeight" /><Small icon="lineType" />
        </SCol>
        <SCol $w={180} $pt={5}>
          <SCombo $w={180} $pl={12}><SSwatch $s={15} $mr={11} /><div>ByLayer</div><Caret $s={4} $c="#111" /></SCombo>
          <SCombo $w={180} $pl={8}><SStroke /><div>ByLayer</div><Caret $s={4} /></SCombo>
          <SCombo $w={180} $pl={8}><SStroke /><div>ByLayer</div><Caret $s={4} /></SCombo>
        </SCol>
      </Panel>
      <Panel w={68} title="组">
        <Big icon="group" label="组" w={42} />
        <SCol $w={22} $pl={3}>
          <Small icon="ungroup" /><Small icon="grpEdit" />
          <SPressed><Icon name="grpSel" /></SPressed>
        </SCol>
      </Panel>
      <Panel w={76} title="实用工具">
        <Big icon="measure" label="测量" w={50} drop />
        <SCol $w={20} $pl={3}>
          <Small icon="quickSel" /><Small icon="point" /><Small icon="calc" />
        </SCol>
      </Panel>
      <Panel w={76} title="剪贴板" drop={false}>
        <Big icon="paste" label="粘贴" w={50} drop />
        <SCol $w={20} $pl={3}>
          <Small icon="cut" /><Small icon="copyClip" />
        </SCol>
      </Panel>
      <Panel w={60} title="视图" launch={2} shift={12}>
        <Big icon="base" label="基点" w={60} drop />
      </Panel>
    </SRibbon>
  </>
)

/* ---------- drawing area ---------- */

const SFileTabs = styled.div`
  display: flex;
  height: 29px;
  padding: 3px 0 0 16px;
  border-bottom: 4px solid #f0f0f0;
  background: #b1b1b1;
`

const SFileTab = styled.div`
  display: flex;
  align-items: center;
  justify-content: space-between;
  width: 133px;
  height: 22px;
  padding: 1px 16px 0;
  font-size: 12.300px;
  color: #1c1c1c;
  background: linear-gradient(#fdfdfd, #f0f0f0);
  clip-path: path("M0 22C6 20 5 0 13 0H120C128 0 126 20 133 22Z");
`

const SNewTab = styled.div`
  display: flex;
  align-items: center;
  justify-content: center;
  width: 23px;
  height: 15px;
  margin: 4px 0 0 2px;
  border-radius: 2px 9px 2px 9px;
  background: #dedede;
`

const SWork = styled.div`
  position: relative;
  display: flex;
  height: 856px;
`

const SEdge = styled.div`
  width: 8px;
  border-left: 6px solid #bcd2ec;
  border-right: 1px solid #000;
  background: #19c3e6;
`

const SViewLabel = styled.div`
  position: absolute;
  left: 4px;
  top: 6px;
  line-height: 18px;
  color: #000;
  letter-spacing: .07px;
`

const SMeter = styled.div`
  position: absolute;
  right: 2px;
  top: 52px;
  width: 8px;
  height: 57px;
  padding: 30px 1px 2px;
  border-radius: 4px;
  background: #505862;
  &::after {
    content: "";
    display: block;
    height: 25px;
    background: repeating-linear-gradient(#2fd558 0 2px, #505862 2px 3px);
  }
`

const SCube = styled.div`
  position: absolute;
  left: 1764px;
  top: 16px;
  display: grid;
  grid-template: 36px 60px 46px 30px / 36px 58px 36px;
  place-items: center;
  font: 400 18px/20px "Noto Sans CJK SC", sans-serif;
`

const SRing = styled.div`
  position: absolute;
  left: 5px;
  top: 5px;
  width: 120px;
  height: 120px;
  border: 11px solid rgba(235, 235, 235, .3);
  border-radius: 50%;
`

const SDirection = styled.div`
  grid-area: ${({ $at }) => $at};
  justify-self: ${({ $side }) => $side || "center"};
  margin: ${({ $m }) => $m};
  color: #dedede;
  -webkit-text-stroke: 2px #a4a4a4;
  paint-order: stroke fill;
`

const SFace = styled.div`
  grid-area: 2 / 2;
  display: flex;
  align-items: center;
  justify-content: center;
  width: 52px;
  height: 52px;
  border: 1px solid #b8b8b8;
  background: rgba(230, 230, 230, .78);
`

const SWcs = styled.div`
  grid-area: 4 / 2;
  display: flex;
  align-items: center;
  gap: 6px;
  height: 17px;
  margin-top: 11px;
  padding: 0 5px 0 4px;
  border-radius: 4px;
  background: rgba(232, 232, 243, .85);
  font: 10px/16px "Liberation Sans", sans-serif;
  color: #929299;
`

const SNav = styled.div`
  position: absolute;
  left: 1874px;
  top: 210px;
  width: 36px;
  height: 216px;
  border: 2px solid #c4c4c4;
  border-radius: 6px;
  background: rgba(243, 243, 243, .82);
`

const SHistory = styled.div`
  position: absolute;
  left: 554px;
  top: 781px;
  display: flex;
  flex-direction: column;
  align-items: flex-start;
  gap: 1px;
`

const SHistoryLine = styled.div`
  height: 15px;
  padding: 0 2px;
  border-radius: 2px;
  background: ${({ $bg }) => $bg};
  color: #f4f4f4;
  font: 13px/14px "Noto Sans CJK SC", sans-serif;
  font-feature-settings: "hwid";
  letter-spacing: ${({ $ls }) => $ls || 0}px;
  white-space: pre;
`

const SCommand = styled.div`
  position: absolute;
  left: 497px;
  top: 829px;
  display: flex;
  width: 927px;
  height: 27px;
  border: 1px solid #707070;
  border-radius: 3px;
  background: #fff;
  overflow: hidden;
`

const SCommandHandle = styled.div`
  width: 54px;
  background: linear-gradient(#7b7b7b, #424242);
`

const SCommandInput = styled.div`
  display: flex;
  align-items: center;
  flex: 1;
  gap: 3px;
  padding: 0 3px 1px 4px;
  & > :last-child { margin-left: auto; transform: scaleY(-1); }
`

const SMark = styled.div`
  position: absolute;
  left: 1768px;
  top: 822px;
  z-index: 2;
  font: 900 36.500px/44px "Noto Sans CJK SC", sans-serif;
  color: #7d7d7d;
  white-space: nowrap;
`

const gridLines = (start, step, from, count) =>
  Array.from({ length: count }, (_, i) => ({ p: Math.floor(start + step * (i + from)), major: (i + from) % 5 === 0 }));

const cols = gridLines(55.100, 25.360, -2, 77);
const rows = gridLines(89.500, 25.370, -3, 34);

const Canvas = () => (
  <svg width="1912" height="856" shapeRendering="crispEdges">
    <rect width="1912" height="856" fill="#fff" />
    {cols.map(({ p }) => <rect key={"h" + p} x={p - 1} width="3" height="856" fill="#000" fillOpacity=".07" />)}
    {rows.map(({ p }) => <rect key={"h" + p} y={p - 1} width="1912" height="3" fill="#000" fillOpacity=".07" />)}
    {cols.map(({ p, major }) => <rect key={p} x={p} width="1" height="856" fill="#000" fillOpacity={major ? .58 : .34} />)}
    {rows.map(({ p, major }) => <rect key={p} y={p} width="1912" height="1" fill="#000" fillOpacity={major ? .58 : .34} />)}
    <path d="M657 243h3v104h-3zM708 243h3v104h-3zM657 425h3v121h-3zM708 425h3v121h-3z" fill="#000" fillOpacity=".16" />
    <path d="M658 243h1v104h-1zM709 243h1v104h-1zM658 425h1v121h-1zM709 425h1v121h-1z" fill="#000" />
    <path d="M962.500 425v41M962.500 481v41M914 473.500h41M970 473.500h41M955.500 466.500h14v14h-14z" fill="none" stroke="#000" />
    <path d="M21.500 785v49.500h49.500M17.500 829.500h9v9h-9z" fill="none" stroke="#000" />
    <path d="M23.500 767.500l6 6 6-6M29.500 773v7M76.500 820.500l12 12M88.500 820.500l-12 12" fill="none" stroke="#000" />
  </svg>
)

const NavBar = () => (
  <SNav>
    <svg width="32" height="212" fill="none" stroke="#d2d2d2">
      <circle cx="25" cy="5" r="3.500" /><circle cx="25" cy="207" r="3.500" />
      <path d="M23 5h4M23 207h4" />
      <path d="M16 20h11v11a11 11 0 1 1-11-11z" /><circle cx="16" cy="31" r="6" /><path d="M8 24l4 3M24 24l-4 3M8 38l4-3M24 38l-4-3" />
      <path d="M10 84l-6-10c-1-3 2-3 3-1l3 3-3-11c0-2 3-2 3 0l3 7 0-10c0-2 3-2 3 0l1 10 3-9c1-2 3-1 3 1l-2 9 4-5c2-1 3 1 2 2l-5 11-2 3z" fill="#f6f6f6" />
      <path d="M5 91l15 15M20 91L5 106M5 95v-4h4M16 91h4v4M5 102v4h4" /><circle cx="20.500" cy="106" r="5" fill="#eee" /><path d="M24 110l4 4" strokeWidth="3" />
      <ellipse cx="16" cy="141" rx="11" ry="5" strokeWidth="1.500" /><path d="M13.500 149v-17h-2.500l4.500-5 4.500 5h-2.500v17z" fill="#eee" /><path d="M6 144l5-4v7z" fill="#d2d2d2" />
      <path d="M4 165.500h25M5.500 170.500h5v6h-5zM13.500 170.500h5v6h-5zM21.500 170.500h5v6h-5zM5.500 179.500h15v13h-15z" /><path d="M10 182l6 4-6 4z" fill="#d2d2d2" />
      <path d="M13.500 50h5l-2.500 2.500zM13.500 120h5l-2.500 2.500zM13.500 158.500h5l-2.500 2.500z" fill="#c4c4c4" stroke="none" />
    </svg>
  </SNav>
)

const DrawingArea = () => (
  <>
    <SFileTabs>
      <SFileTab>
        <span>Drawing1*</span>
        <svg width="9" height="9"><path d="M1 1l6.500 7M7.500 1L1 8" stroke="#aaa" strokeWidth="1.800" /></svg>
      </SFileTab>
      <SNewTab><svg width="9" height="9"><path d="M4.500 0v9M0 4.500h9" stroke="#444" strokeWidth="1.800" /></svg></SNewTab>
    </SFileTabs>
    <SWork>
      <Canvas />
      <SEdge />
      <SViewLabel>[−][俯视][二维线框]</SViewLabel>
      <SCube>
        <SRing />
        <SDirection $at="1 / 2" $m="0 0 14px">北</SDirection>
        <SDirection $at="2 / 1" $side="start" $m="2px 0 0">西</SDirection>
        <SFace>
          <svg width="32" height="32"><rect width="32" height="32" fill="#dcdee4" /><path d="M14.500 4v22" stroke="#aaa" strokeWidth="2" /><path d="M22 13.500l3-2 2 2zM26 26l3-3 2 3zM1 25h1v1H1z" fill="#aaa" /></svg>
        </SFace>
        <SDirection $at="2 / 3" $side="end" $m="2px 0 0">东</SDirection>
        <SDirection $at="3 / 2" $m="10px 0 0">南</SDirection>
        <SWcs>WCS<svg width="9" height="6"><path d="M.8.500h7.400L4.500 5z" fill="none" stroke="#b0b0b8" /></svg></SWcs>
      </SCube>
      <NavBar />
      <SMeter />
      <SHistory>
        <SHistoryLine $bg="rgba(130,130,130,.88)">选择多线:</SHistoryLine>
        <SHistoryLine $bg="rgba(108,108,108,.92)">选择第二个点:</SHistoryLine>
        <SHistoryLine $bg="rgba(92,92,92,.95)" $ls={.26}>选择多线 或 [放弃(U)]:</SHistoryLine>
      </SHistory>
      <SCommand>
        <SCommandHandle>
          <svg width="53" height="25" fill="none">
            <path d="M4 4v17M6.500 4v17M9 4v17" stroke="#bbb" strokeWidth="1.200" strokeDasharray="1.500 1.500" />
            <path d="M15 8l8 8M23 8l-8 8" stroke="#f2f2f2" strokeWidth="2" />
            <path d="M37 6c-3 0-4 4-1 5l2 0 7 7c1 1 3 0 2-2l-7-7c1-3-1-4-3-3l2 3-2 1z" fill="#e8eaee" stroke="#dfe2e6" strokeWidth=".8" />
          </svg>
        </SCommandHandle>
        <SCommandInput>
          <svg width="15" height="15"><rect x=".5" y=".5" width="14" height="14" fill="#e8ebf1" stroke="#a6a9b0" /><path d="M3 4l3.500 3L3 10M7.500 11.500h5" fill="none" stroke="#555b66" strokeWidth="1.300" /></svg>
          <Caret $s={3} $c="#999" />
          <Caret $s={4} $c="#111" />
        </SCommandInput>
      </SCommand>
      <SMark>最需教育</SMark>
    </SWork>
  </>
)

/* ---------- bottom bar ---------- */

const SBottom = styled.div`
  display: flex;
  height: 30px;
  border-bottom: 2px solid #1b2433;
  background: #b1b1b1;
`

const SSheets = styled.div`
  display: flex;
  width: 752px;
  padding-left: 10px;
  border-top: 1px solid #8f8f8f;
`

const SSheet = styled.div`
  width: ${({ $w }) => $w}px;
  height: 17px;
  line-height: 18px;
  text-align: center;
  font-weight: ${({ $on }) => ($on ? 700 : 400)};
  color: ${({ $on }) => ($on ? "#000" : "#6c6c6c")};
  background: ${({ $on }) => ($on ? "#fafafa" : "#dcdcdc")};
  clip-path: ${({ $w }) => `path("M0 0H${$w}C${$w - 4} 4 ${$w - 4} 17 ${$w - 10} 17H10C4 17 4 4 0 0Z")`};
`

const SAddSheet = styled.div`
  display: flex;
  align-items: center;
  justify-content: center;
  width: 23px;
  height: 16px;
  margin-left: 4px;
  border-radius: 8px 1px 8px 1px;
  background: #e2e2e2;
`

const SStatus = styled.div`
  display: flex;
  align-items: center;
  width: 1166px;
  padding-bottom: 2px;
  border-top: 1px solid #8a8a8a;
  background: #e5e5e5;
  color: #000;
  white-space: nowrap;
  svg { overflow: visible; }
`

const SCoords = styled.div`
  width: 183px;
  padding-left: 9px;
  font-size: 12.400px;
  border-right: 1px solid #f3f3f3;
`

const SStatusText = styled.div`
  width: ${({ $w }) => $w}px;
  margin-left: ${({ $ml }) => $ml}px;
  font-weight: ${({ $b }) => ($b ? 600 : 400)};
`

const SStatusItem = styled.div`
  display: flex;
  justify-content: center;
  flex: none;
  width: ${({ $w }) => $w}px;
  margin-left: ${({ $ml }) => $ml}px;
  filter: ${({ $glow }) => ($glow ? "drop-shadow(0 0 1.500px #8cc4ff)" : "none")};
`

// [icon or "v" for a drop arrow, space before]
const statusLeft = [
  ["sGrid", 3], ["sSnap", 6], ["v", 7], ["sInfer", 10], ["sDyn", 7], ["sOrtho", 9], ["sPolar", 4], ["v", 6],
  ["sIso", 7], ["v", 6], ["sTrack", 8], ["sOsnap", 6], ["v", 6], ["sLwt", 8], ["sTrans", 7], ["sCycle", 6],
  ["s3d", 7], ["v", 7], ["sDucs", 10], ["sFilter", 6], ["v", 6], ["sGizmo", 7], ["v", 6], ["sVis", 10], ["sAuto", 6], ["sAnno", 6],
];
const statusMid = [["v", 2], ["sGear", 10], ["v", 7], ["sPlus", 7], ["sUnits", 9]];
const statusRight = [
  ["v", 32], ["sProps", 8], ["sLock", 9], ["v", 6], ["sIsol", 7], ["sHard", 10], ["sClean", 9], ["sMenu", 6],
];
const active = ["sGrid", "sDyn", "sPolar", "sTrack", "sOsnap", "sTrans", "sDucs", "sVis"];

const renderStatus = (list) => list.map(([name, ml], i) => (
  <SStatusItem key={i} $ml={ml} $w={name === "v" ? 8 : 18} $glow={active.includes(name)}>
    {name === "v" ? <Caret $s={4} $c="#111" /> : <Icon name={name} />}
  </SStatusItem>
));

const BottomBar = () => (
  <SBottom>
    <SSheets>
      <SSheet $w={49} $on>模型</SSheet>
      <SSheet $w={54}>布局1</SSheet>
      <SSheet $w={54}>布局2</SSheet>
      <SAddSheet><svg width="9" height="9"><path d="M4.500 0v9M0 4.500h9" stroke="#444" strokeWidth="1.800" /></svg></SAddSheet>
    </SSheets>
    <SStatus>
      <SCoords>2257.8112, 1448.6678, 0.0000</SCoords>
      <SStatusText $w={26} $ml={5} $b>模型</SStatusText>
      {renderStatus(statusLeft)}
      <SStatusText $w={18} $ml={8}>1:1</SStatusText>
      {renderStatus(statusMid)}
      <SStatusText $w={24} $ml={8} $b>小数</SStatusText>
      {renderStatus(statusRight)}
    </SStatus>
  </SBottom>
)

const App = () => {
  return (
    <SApp>
      <GlobalStyle />
      <Header />
      <Ribbon />
      <DrawingArea />
      <BottomBar />
    </SApp>
  )
}

export default App;
